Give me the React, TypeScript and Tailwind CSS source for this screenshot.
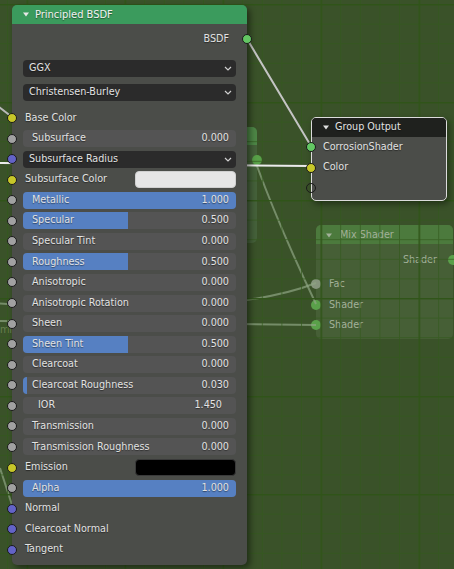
import React from "react";

type SockColor = "yellow" | "gray" | "purple" | "green";

const sockClass: Record<SockColor, string> = {
  yellow: "bg-[#c7c729]",
  gray: "bg-[#a1a1a1]",
  purple: "bg-[#6363c7]",
  green: "bg-[#63c763]",
};

function Socket({ color, right }: { color: SockColor; right?: boolean }) {
  return (
    <span
      className={`absolute top-1/2 -translate-y-1/2 w-[10px] h-[10px] rounded-full border border-[#1a1a1a] ${sockClass[color]} ${
        right ? "-right-[5px]" : "-left-[5px]"
      }`}
    />
  );
}

function Tri({ className }: { className?: string }) {
  return (
    <svg width="6" height="5" viewBox="0 0 6 5" className={className}>
      <polygon points="0,0.5 6,0.5 3,4.5" fill="currentColor" />
    </svg>
  );
}

function Chevron() {
  return (
    <svg width="8" height="5" viewBox="0 0 8 5" className="shrink-0">
      <polyline points="1,1 4,4 7,1" fill="none" stroke="#d0d0d0" strokeWidth="1.2" />
    </svg>
  );
}

type Row =
  | { kind: "label"; label: string; sock: SockColor }
  | { kind: "slider"; label: string; value: string; fill: number }
  | { kind: "dropdown"; label: string; sock: SockColor }
  | { kind: "swatch"; label: string; swatch: "white" | "black"; sock: SockColor }
  | { kind: "number"; label: string; value: string };

const rows: Row[] = [
  { kind: "label", label: "Base Color", sock: "yellow" },
  { kind: "slider", label: "Subsurface", value: "0.000", fill: 0 },
  { kind: "dropdown", label: "Subsurface Radius", sock: "purple" },
  { kind: "swatch", label: "Subsurface Color", swatch: "white", sock: "yellow" },
  { kind: "slider", label: "Metallic", value: "1.000", fill: 1 },
  { kind: "slider", label: "Specular", value: "0.500", fill: 105 },
  { kind: "slider", label: "Specular Tint", value: "0.000", fill: 0 },
  { kind: "slider", label: "Roughness", value: "0.500", fill: 105 },
  { kind: "slider", label: "Anisotropic", value: "0.000", fill: 0 },
  { kind: "slider", label: "Anisotropic Rotation", value: "0.000", fill: 0 },
  { kind: "slider", label: "Sheen", value: "0.000", fill: 0 },
  { kind: "slider", label: "Sheen Tint", value: "0.500", fill: 105 },
  { kind: "slider", label: "Clearcoat", value: "0.000", fill: 0 },
  { kind: "slider", label: "Clearcoat Roughness", value: "0.030", fill: 4 },
  { kind: "number", label: "IOR", value: "1.450" },
  { kind: "slider", label: "Transmission", value: "0.000", fill: 0 },
  { kind: "slider", label: "Transmission Roughness", value: "0.000", fill: 0 },
  { kind: "swatch", label: "Emission", swatch: "black", sock: "yellow" },
  { kind: "slider", label: "Alpha", value: "1.000", fill: 1 },
  { kind: "label", label: "Normal", sock: "purple" },
  { kind: "label", label: "Clearcoat Normal", sock: "purple" },
  { kind: "label", label: "Tangent", sock: "purple" },
];

function NodeRow({ r }: { r: Row }) {
  const base = "relative h-[20.57px] flex items-center px-[11px]";
  if (r.kind === "label") {
    return (
      <div className={base}>
        <Socket color={r.sock} />
        <span className="pl-[2px]">{r.label}</span>
      </div>
    );
  }
  if (r.kind === "dropdown") {
    return (
      <div className={base}>
        <Socket color={r.sock} />
        <div className="flex-1 h-[17px] rounded-[4px] bg-[#2b2b2b] flex items-center justify-between pl-[6px] pr-[4px]">
          <span>{r.label}</span>
          <Chevron />
        </div>
      </div>
    );
  }
  if (r.kind === "swatch") {
    return (
      <div className={base}>
        <Socket color={r.sock} />
        <span className="pl-[2px] flex-1">{r.label}</span>
        <div
          className={`w-[101px] h-[17px] rounded-[4px] ${
            r.swatch === "white" ? "bg-[#e6e6e6] border border-[#d0d0d0]" : "bg-black border border-[#3a3a3a]"
          }`}
        />
      </div>
    );
  }
  if (r.kind === "number") {
    return (
      <div className={base}>
        <Socket color="gray" />
        <div className="flex-1 h-[17px] rounded-[4px] bg-[#545454] flex items-center justify-between pl-[15px] pr-[14px]">
          <span>{r.label}</span>
          <span>{r.value}</span>
        </div>
      </div>
    );
  }
  return (
    <div className={base}>
      <Socket color="gray" />
      <div className="relative flex-1 h-[17px] rounded-[4px] bg-[#545454] overflow-hidden flex items-center justify-between pl-[9px] pr-[7px]">
        {r.fill === 1 ? (
          <div className="absolute inset-0 bg-[#5680c2]" />
        ) : r.fill > 0 ? (
          <div className="absolute left-0 top-0 bottom-0 bg-[#5680c2]" style={{ width: r.fill }} />
        ) : null}
        <span className="relative">{r.label}</span>
        <span className="relative">{r.value}</span>
      </div>
    </div>
  );
}

export default function App() {
  return (
    <div className="relative w-[454px] h-[569px] overflow-hidden bg-[#3a5229] font-['DejaVu_Sans_Condensed','DejaVu_Sans',sans-serif] font-stretch-condensed text-[10.7px] leading-none text-[#e2e2e2] [text-shadow:0_1px_1px_rgba(0,0,0,0.45)]">
      {/* dimmed parent-tree nodes */}
      <div className="absolute left-[140px] top-[127px] w-[117px] h-[116px] rounded-[5px] bg-[#45613a]">
        <div className="h-[18px] rounded-t-[5px] bg-[#4d8646]" />
        <span className="absolute -right-[5px] top-[28px] w-[10px] h-[10px] rounded-full bg-[#58a048]" />
      </div>

      <div className="absolute left-[316px] top-[225px] w-[137px] h-[114px] rounded-[5px] bg-[#465f36] text-[#a3b19a] [text-shadow:none]">
        <div className="h-[19px] rounded-t-[5px] bg-[#4c7a3d] flex items-center pl-[10px] gap-[8px] pt-[2px]">
          <Tri className="text-[#a3b19a]" />
          <span>Mix Shader</span>
        </div>
        <div className="relative h-[20.57px] mt-[6px] flex items-center justify-end pr-[16px]">
          <span>Shader</span>
          <span className="absolute -right-[5px] top-1/2 -translate-y-1/2 w-[10px] h-[10px] rounded-full bg-[#5aa04a]" />
        </div>
        <div className="relative h-[20.57px] mt-[3.5px] flex items-center pl-[13px]">
          <span className="absolute -left-[5px] top-1/2 -translate-y-1/2 w-[10px] h-[10px] rounded-full bg-[#86957d]" />
          <span>Fac</span>
        </div>
        <div className="relative h-[20.57px] flex items-center pl-[13px]">
          <span className="absolute -left-[5px] top-1/2 -translate-y-1/2 w-[10px] h-[10px] rounded-full bg-[#5aa04a]" />
          <span>Shader</span>
        </div>
        <div className="relative h-[20.57px] flex items-center pl-[13px]">
          <span className="absolute -left-[5px] top-1/2 -translate-y-1/2 w-[10px] h-[10px] rounded-full bg-[#5aa04a]" />
          <span>Shader</span>
        </div>
      </div>

      <span className="absolute left-[0px] top-[325px] text-[#66804f] [text-shadow:none]">mixe</span>

      {/* dim wires + grid */}
      <svg className="absolute inset-0" width="454" height="569" viewBox="0 0 454 569">
        <defs>
          <pattern id="minor" x="7" y="4" width="19.6" height="19.6" patternUnits="userSpaceOnUse">
            <path d="M0 0.5 H19.6 M0.5 0 V19.6" stroke="#345a1c" strokeOpacity="0.7" strokeWidth="1" fill="none" />
          </pattern>
          <pattern id="major" x="26.6" y="4" width="98" height="98" patternUnits="userSpaceOnUse">
            <path d="M0 0.75 H98 M0.75 0 V98" stroke="#2f5418" strokeOpacity="0.85" strokeWidth="1.5" fill="none" />
          </pattern>
        </defs>
        <g stroke="#8fa583" strokeOpacity="0.7" strokeWidth="2" fill="none">
          <path d="M257 166 C 275 215, 295 260, 316 304" />
          <path d="M-5 303 C 150 315, 260 305, 316 283" />
          <path d="M-5 321 C 120 323, 220 324, 316 325" />
          <path d="M0 468 L 12 505" />
        </g>
        <rect width="454" height="569" fill="url(#minor)" />
        <rect width="454" height="569" fill="url(#major)" />
        <g fill="none" strokeLinecap="round">
          <path d="M-5 104 L 12 117" stroke="#b9b9b9" strokeWidth="2" />
          <path d="M-5 163 C 100 163, 220 166, 311 166" stroke="#ebebeb" strokeWidth="2" />
          <path d="M247 39 L 311 146" stroke="#c4c4c4" strokeWidth="2" />
        </g>
      </svg>

      {/* Principled BSDF */}
      <div className="absolute left-[12px] top-[5px] w-[235px] h-[560px] rounded-[5px] bg-[#4b4d49] shadow-[3px_3px_6px_rgba(0,0,0,0.45)]">
        <div className="h-[19px] rounded-t-[5px] bg-[#3b9b5d] flex items-center pl-[11px] gap-[6px] text-[#f2f2f2] text-[11px]">
          <Tri className="text-[#e8e8e8]" />
          <span>Principled BSDF</span>
        </div>
        <div className="relative h-[20px] mt-[5px] flex items-center justify-end pr-[18px]">
          <span>BSDF</span>
          <Socket color="green" right />
        </div>
        <div className="px-[11px] mt-[11px] flex flex-col gap-[7px]">
          <div className="h-[17px] rounded-[4px] bg-[#2b2b2b] flex items-center justify-between pl-[6px] pr-[4px]">
            <span>GGX</span>
            <Chevron />
          </div>
          <div className="h-[17px] rounded-[4px] bg-[#2b2b2b] flex items-center justify-between pl-[6px] pr-[4px]">
            <span>Christensen-Burley</span>
            <Chevron />
          </div>
        </div>
        <div className="mt-[6.7px] flex flex-col">
          {rows.map((r, i) => (
            <NodeRow key={i} r={r} />
          ))}
        </div>
      </div>

      {/* Group Output */}
      <div className="absolute left-[311px] top-[117px] w-[136px] h-[84px] rounded-[5px] border border-[#dcdcdc] bg-[#4b4d49] shadow-[2px_3px_6px_rgba(0,0,0,0.4)]">
        <div className="h-[19px] rounded-t-[4px] bg-[#1f211e] flex items-center pl-[11px] gap-[6px]">
          <Tri className="text-[#e0e0e0]" />
          <span>Group Output</span>
        </div>
        <div className="relative h-[20.57px] -ml-px flex items-center pl-[12px]">
          <Socket color="green" />
          <span>CorrosionShader</span>
        </div>
        <div className="relative h-[20.57px] -ml-px flex items-center pl-[12px]">
          <Socket color="yellow" />
          <span>Color</span>
        </div>
        <div className="relative h-[20.57px] -ml-px flex items-center pl-[12px]">
          <span className="absolute -left-[5px] top-1/2 -translate-y-1/2 w-[10px] h-[10px] rounded-full border border-[#1a1a1a]" />
        </div>
      </div>
    </div>
  );
}
